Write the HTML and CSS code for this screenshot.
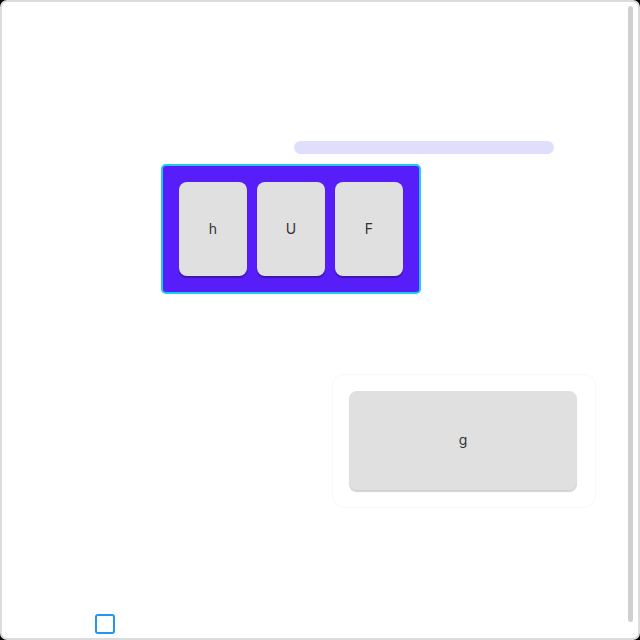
FILE: index.html
```html
<!DOCTYPE html>
<html>
<head>
<meta charset="utf-8">
<link rel="stylesheet" href="styles.css">
</head>
<body>
<div class="frame">
  <div class="bar"></div>
  <div class="tray">
    <div class="key">h</div>
    <div class="key">U</div>
    <div class="key">F</div>
  </div>
  <div class="panel">
    <div class="wide-key">g</div>
  </div>
  <div class="check"></div>
  <div class="scrollbar"></div>
</div>
</body>
</html>
```
FILE: styles.css
```css
html, body {
  margin: 0;
  padding: 0;
  background: #000;
}
.frame {
  position: relative;
  box-sizing: border-box;
  width: 640px;
  height: 640px;
  border: 2px solid #dcdcdc;
  border-radius: 7px;
  background: #fff;
  overflow: hidden;
  font-family: Inter, "Open Sans", sans-serif;
  display: flex;
  flex-direction: column;
  align-items: flex-start;
}
.bar {
  margin-top: 139px;
  margin-left: 292px;
  width: 260px;
  height: 13px;
  border-radius: 7px;
  background: #e0dffb;
}
.tray {
  box-sizing: border-box;
  margin-top: 10px;
  margin-left: 159px;
  width: 260px;
  height: 130px;
  border: 2px solid #1ccbef;
  border-radius: 5px;
  background: #571ef9;
  padding: 16px;
  display: flex;
  gap: 10px;
}
.key {
  width: 68px;
  height: 94px;
  padding-bottom: 2px;
  box-sizing: border-box;
  border-radius: 8px;
  background: #e0e0e0;
  box-shadow: 0 2px 1px rgba(0, 0, 0, 0.3);
  display: flex;
  align-items: center;
  justify-content: center;
  font-size: 14px;
  color: #333;
}
.panel {
  box-sizing: border-box;
  margin-top: 80px;
  margin-left: 330px;
  width: 264px;
  height: 134px;
  border: 1px solid #f8f8f8;
  border-radius: 12px;
  padding: 16px 18px 17px 16px;
}
.wide-key {
  height: 99px;
  padding-bottom: 2px;
  box-sizing: border-box;
  border-radius: 8px;
  background: #e0e0e0;
  box-shadow: 0 2px 1px rgba(0, 0, 0, 0.18);
  display: flex;
  align-items: center;
  justify-content: center;
  font-size: 14px;
  color: #333;
}
.check {
  box-sizing: border-box;
  margin-top: 106px;
  margin-left: 93px;
  width: 20px;
  height: 20px;
  border: 2px solid #2196f3;
  border-radius: 3px;
}
.scrollbar {
  position: absolute;
  top: 4px;
  right: 5px;
  width: 5px;
  height: 616px;
  border-radius: 3px;
  background: #d0d0d0;
}
```
